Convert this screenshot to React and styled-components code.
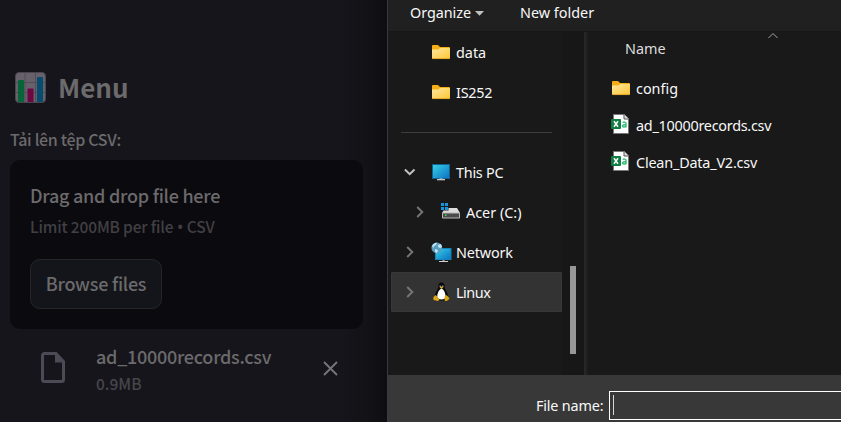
import React from "react";
import styled, { createGlobalStyle } from "styled-components";

const Global = createGlobalStyle`
  * { box-sizing: border-box; }
  body { margin: 0; background: #16151b; overflow: hidden; }
  svg { display: block; flex: none; }
`;

const Page = styled.div`
  display: flex;
  width: 841px;
  height: 422px;
  overflow: hidden;
`;

/* ---------- sidebar ---------- */

const Sidebar = styled.aside`
  width: 387px;
  height: 422px;
  padding: 67px 23px 0 10px;
  color: #6b6a6c;
  font-family: "Noto Sans CJK SC", sans-serif;
  font-weight: 500;
  background: linear-gradient(90deg, #16151b 0, #16151b 340px, #131217 366px, #0e0d12 387px);
`;

const Title = styled.h1`
  display: flex;
  align-items: center;
  gap: 12px;
  height: 40px;
  margin: 0;
  padding-left: 5px;
  font-size: 26px;
  font-weight: 700;
  line-height: 40px;
`;

const Line = styled.div`
  font-size: ${(p) => p.$size}px;
  line-height: ${(p) => p.$height}px;
  letter-spacing: ${(p) => p.$spacing || 0}px;
  color: ${(p) => (p.$dim ? p.$dim : "inherit")};
  white-space: nowrap;
`;

const Label = styled(Line)`
  margin-top: 20px;
`;

const Bullet = styled.span`
  margin: 0 0.5px;
  font-family: "Noto Sans", sans-serif;
`;

const DropZone = styled.section`
  width: 353px;
  height: 169px;
  margin-top: 9px;
  padding: 21px 20px 0;
  border-radius: 10px;
  background: #0b0a0f;
`;

const BrowseButton = styled.button`
  display: flex;
  align-items: center;
  justify-content: center;
  width: 132px;
  height: 50px;
  margin-top: 16px;
  padding: 0 0 2px;
  border: 1px solid #25252a;
  border-radius: 10px;
  background: #14151a;
  color: inherit;
  font: 500 18px "Noto Sans CJK SC", sans-serif;
  letter-spacing: -0.25px;
`;

const Upload = styled.div`
  display: flex;
  padding: 14px 0 0 31px;
`;

const UploadText = styled.div`
  width: 227px;
  margin-left: 30px;
`;

const UploadIcon = styled.div`
  padding-top: 9px;
`;

const CloseIcon = styled.div`
  padding-top: 18px;
`;

/* ---------- file dialog ---------- */

const Dialog = styled.main`
  display: flex;
  flex-direction: column;
  width: 454px;
  height: 422px;
  border-left: 1px solid #3a3a3d;
  background: #191919;
  color: #f8f8f8;
  font-family: "Noto Sans", sans-serif;
  font-size: 14.4px;
`;

const Toolbar = styled.header`
  display: flex;
  height: 32px;
  padding: 3px 0 0 22px;
  background: #202020;
  border-bottom: 1px solid #171717;
`;

const ToolItem = styled.div`
  display: flex;
  align-items: center;
  width: ${(p) => p.$width}px;
  height: 20px;
  gap: 4px;
`;

const Body = styled.div`
  display: flex;
  height: 343px;
`;

const Nav = styled.nav`
  width: 174px;
  padding-left: 3px;
`;

const NavRow = styled.div`
  display: flex;
  align-items: center;
  width: 171px;
  height: 40px;
  padding-left: ${(p) => 12 + (p.$indent || 0)}px;
  background: ${(p) => (p.$selected ? "#333333" : "transparent")};
  border: 1px solid ${(p) => (p.$selected ? "#383838" : "transparent")};
  border-radius: 1px;
`;

const Chevron = styled.div`
  width: 12px;
  margin-right: 15px;
`;

const NavIcon = styled.div`
  display: flex;
  justify-content: center;
  width: 20px;
  margin-right: 5px;
  padding-bottom: ${(p) => p.$lift || 0}px;
`;

const Text = styled.span`
  letter-spacing: ${(p) => p.$spacing || 0}px;
  line-height: 20px;
  white-space: nowrap;
`;

const NavText = styled(Text)`
  padding-top: 2px;
`;

const Separator = styled.hr`
  width: 151px;
  height: 1px;
  margin: 20px 0 19px 10px;
  border: 0;
  background: #3d3d3d;
`;

const ScrollTrack = styled.div`
  width: 22px;
  padding: 234px 0 0 8px;
  background: #171717;
`;

const ScrollThumb = styled.div`
  width: 6px;
  height: 88px;
  background: #979797;
`;

const Splitter = styled.div`
  width: 4px;
  border-left: 2px solid #272727;
  background: #1e1e1e;
`;

const Files = styled.section`
  flex: 1;
  padding-left: 23px;
`;

const FilesHeader = styled.div`
  display: flex;
  height: 38px;
  padding-left: 14px;
  color: #dedede;
`;

const HeaderName = styled.div`
  width: 142px;
  padding-top: 7px;
`;

const FileRow = styled.div`
  display: flex;
  align-items: center;
  gap: 5px;
  height: 37px;
`;

const FileIcon = styled.div`
  width: 20px;
  padding-bottom: ${(p) => p.$lift || 0}px;
`;

const Footer = styled.footer`
  display: flex;
  height: 47px;
  padding: 16px 0 0 148px;
  background: #383838;
`;

const FieldLabel = styled.label`
  width: 73px;
  padding-top: 5px;
  line-height: 20px;
  letter-spacing: -0.18px;
  white-space: nowrap;
`;

const Field = styled.div`
  flex: 1;
  height: 29px;
  padding: 3px 0 0 3px;
  border: 1px solid #ffffff;
  border-right: 0;
`;

const Caret = styled.div`
  width: 1px;
  height: 20px;
  background: #d6d6d6;
`;

/* ---------- drawings ---------- */

const ChartIcon = () => (
  <svg width="31" height="31" viewBox="0 0 31 31">
    <rect x="0.5" y="0.5" width="30" height="30" rx="3.5" fill="#66616b" stroke="#49464f" />
    <path d="M10 1v29M20.500 1v29M1 10.500h29M1 20.500h29" stroke="#514d57" />
    <path d="M3 30V9a1 1 0 0 1 1-1h4a1 1 0 0 1 1 1V30z" fill="#066536" />
    <path d="M12.500 30V17.500a1 1 0 0 1 1-1h4a1 1 0 0 1 1 1V30z" fill="#6d0743" />
    <path d="M22 30V6a1 1 0 0 1 1-1h4a1 1 0 0 1 1 1V30z" fill="#064b70" />
  </svg>
);

const DocIcon = () => (
  <svg width="25" height="31" viewBox="0 0 25 31">
    <path d="M3.500 1.500H15L22.500 9.500v18a2 2 0 0 1-2 2H3.500a2 2 0 0 1-2-2V3.500a2 2 0 0 1 2-2z" fill="none" stroke="#4c4b55" strokeWidth="3" />
    <path d="M14 1v9.500h10z" fill="#4c4b55" />
  </svg>
);

const CrossIcon = () => (
  <svg width="15" height="15" viewBox="0 0 15 15">
    <path d="M1 1l13 13M14 1L1 14" stroke="#77767a" strokeWidth="1.8" />
  </svg>
);

const Folder = () => (
  <svg width="20" height="16" viewBox="0 0 20 16">
    <defs>
      <linearGradient id="folder" x1="0" y1="0" x2="1" y2="1">
        <stop offset="0" stopColor="#ffe9a0" />
        <stop offset="1" stopColor="#fdc535" />
      </linearGradient>
    </defs>
    <path d="M1 2a1 1 0 0 1 1-1h5l2 2h9a1 1 0 0 1 1 1v3H1z" fill="#f4ae14" />
    <path d="M1 5.500h6.500L9 4h10v10a1 1 0 0 1-1 1H2a1 1 0 0 1-1-1z" fill="url(#folder)" />
    <path d="M1.500 14.600h17" stroke="#d99a1c" strokeWidth=".8" />
  </svg>
);

const Down = () => (
  <svg width="12" height="12" viewBox="0 0 12 12">
    <path d="M0.900 3.500L5.700 8.200l4.800-4.700" fill="none" stroke="#c4c4c4" strokeWidth="2" />
  </svg>
);

const Right = () => (
  <svg width="12" height="12" viewBox="0 0 12 12">
    <path d="M3.200 1L8.300 6l-5.100 5" fill="none" stroke="#777777" strokeWidth="1.900" />
  </svg>
);

const Monitor = () => (
  <svg width="20" height="18" viewBox="0 0 20 18">
    <defs>
      <linearGradient id="screen" x1="0" y1="0" x2="1" y2="1">
        <stop offset="0" stopColor="#35d3e6" />
        <stop offset="1" stopColor="#0b6fc4" />
      </linearGradient>
    </defs>
    <rect x="1.500" y="1.500" width="17" height="14" fill="url(#screen)" stroke="#12618f" />
    <path d="M8.500 15h3v1h-3z" fill="#8a9299" />
    <path d="M6 16h8v1.300H6z" fill="#c5cbd0" />
  </svg>
);

const Drive = () => (
  <svg width="20" height="16" viewBox="0 0 20 16">
    <path d="M4.500 5H16l3 5H1l1.500-2.500H7.500V5z" fill="#dcdcdc" />
    <path d="M0 0h3v3H0zM4 0h3v3H4zM0 4h3v3H0zM4 4h3v3H4z" fill="#1594df" />
    <rect x="1" y="9.500" width="18" height="6" rx=".8" fill="#b8b8b8" />
    <rect x="2" y="10.500" width="16" height="4" fill="#4a4b4d" />
    <path d="M4 11.500h1.500v1.500H4z" fill="#43dc52" />
  </svg>
);

const NetworkIcon = () => (
  <svg width="21" height="21" viewBox="0 0 21 21">
    <rect x="4.500" y="6.500" width="15.500" height="11" fill="url(#screen)" stroke="#1583ba" />
    <path d="M11.500 18h2v1.500h-2z" fill="#9ba2a8" />
    <path d="M8 19h9v1H8z" fill="#ccd1d5" />
    <circle cx="5.800" cy="5.800" r="5.400" fill="#5a9ec0" />
    <path d="M1 4c1-2 3-3.500 5-3.300L5 3 3 4 2.500 6zM7 3l3-1 1 3-2 1-2-1zM4 7l3 1-1 3-2-1z" fill="#c3e4f0" />
  </svg>
);

const Penguin = () => (
  <svg width="17" height="20" viewBox="0 0 18 20">
    <path d="M9 0c-2.500 0-3.500 2-3.300 4.500C5.800 7 2 10 2 14.500c0 3 3 4.500 7 4.500s7.200-1.500 7-4.500C15.800 10.500 12.200 7 12.300 4.500 12.400 2 11.500 0 9 0z" fill="#090909" />
    <path d="M9 6.500c-2 0-4.500 4.500-4.500 8 0 2.500 2 3.500 4.500 3.500s4.300-1 4.300-3.500c0-3.500-2.300-8-4.300-8z" fill="#ffffff" />
    <circle cx="7.600" cy="3.800" r=".8" fill="#bdbdbd" />
    <circle cx="10.300" cy="3.800" r=".8" fill="#bdbdbd" />
    <path d="M7 5.200L9 4.300l2 .9-2 1.600z" fill="#e3a812" />
    <path d="M3 13.300l3.800 4.700c-.5 2-2.800 1.800-6.300.2-.5-1 0-3 .5-3.500zM14.800 13.500L17.500 17c-1 1.300-2.500 3-4.500 2.600-1.300-.8-.7-4.500-.2-5.500z" fill="#dba514" />
  </svg>
);

const CsvIcon = () => (
  <svg width="20" height="20" viewBox="0 0 20 20">
    <path d="M2.500.5H13.500L17.500 4.500v15h-15z" fill="#fff" stroke="#777" />
    <path d="M13 .5V5h4.500" fill="#ddd" stroke="#555" />
    <rect x="0" y="5" width="10" height="10" rx="1" fill="#127d43" />
    <path d="M3 7.300l4 5.400M7 7.300l-4 5.400" stroke="#fff" strokeWidth="1.500" />
    <path d="M11.700 8.500c1.300-.8 3.300-.6 3.300.8v4.200M15 10.500c-4-.2-4.300 2.500-2.300 2.500 1 0 2.300-.6 2.300-2" fill="none" stroke="#35bd78" strokeWidth="1.400" />
  </svg>
);

const navItems = [
  { label: "data", icon: Folder, spacing: 0 },
  { label: "IS252", icon: Folder, spacing: -0.25 },
  { separator: true, label: "separator" },
  { label: "This PC", icon: Monitor, chevron: Down, spacing: -0.25 },
  { label: "Acer (C:)", icon: Drive, chevron: Right, indent: 10, spacing: 0, lift: 3 },
  { label: "Network", icon: NetworkIcon, chevron: Right, spacing: -0.15 },
  { label: "Linux", icon: Penguin, chevron: Right, selected: true, spacing: -0.45 },
];

const files = [
  { label: "config", icon: Folder, lift: 2 },
  { label: "ad_10000records.csv", icon: CsvIcon, spacing: -0.26, lift: 4 },
  { label: "Clean_Data_V2.csv", icon: CsvIcon, spacing: -0.19, lift: 4 },
];

export default function App() {
  return (
    <Page>
      <Global />
      <Sidebar>
        <Title><ChartIcon />Menu</Title>
        <Label $size={16} $height={24} $spacing={-0.32}>Tải lên tệp CSV:</Label>
        <DropZone>
          <Line $size={18} $height={29} $spacing={-0.25}>Drag and drop file here</Line>
          <Line $size={15.5} $height={32} $spacing={-0.16} $dim="#414044">
            Limit 200MB per file <Bullet>•</Bullet> CSV
          </Line>
          <BrowseButton>Browse files</BrowseButton>
        </DropZone>
        <Upload>
          <UploadIcon><DocIcon /></UploadIcon>
          <UploadText>
            <Line $size={18} $height={26} $spacing={-0.27}>ad_10000records.csv</Line>
            <Line $size={15.5} $height={29} $dim="#464549">0.9MB</Line>
          </UploadText>
          <CloseIcon><CrossIcon /></CloseIcon>
        </Upload>
      </Sidebar>
      <Dialog>
        <Toolbar>
          <ToolItem $width={110}>
            <Text $spacing={-0.05}>Organize</Text>
            <svg width="9" height="5" viewBox="0 0 9 5"><path d="M0 0h9L4.500 4.700z" fill="#c1c1c1" /></svg>
          </ToolItem>
          <ToolItem $width={90}><Text>New folder</Text></ToolItem>
        </Toolbar>
        <Body>
          <Nav>
            {navItems.map(({ label, icon: Icon, chevron: Arrow, ...item }) =>
              item.separator ? <Separator key={label} /> : (
                <NavRow key={label} $indent={item.indent} $selected={item.selected}>
                  <Chevron>{Arrow && <Arrow />}</Chevron>
                  <NavIcon $lift={item.lift}><Icon /></NavIcon>
                  <NavText $spacing={item.spacing}>{label}</NavText>
                </NavRow>
              )
            )}
          </Nav>
          <ScrollTrack><ScrollThumb /></ScrollTrack>
          <Splitter />
          <Files>
            <FilesHeader>
              <HeaderName><Text>Name</Text></HeaderName>
              <svg width="12" height="8" viewBox="0 0 12 8"><path d="M1.500 6L6 1.500 10.500 6" fill="none" stroke="#a5a5a5" /></svg>
            </FilesHeader>
            {files.map(({ label, icon: Icon, spacing, lift }) => (
              <FileRow key={label}>
                <FileIcon $lift={lift}><Icon /></FileIcon>
                <Text $spacing={spacing}>{label}</Text>
              </FileRow>
            ))}
          </Files>
        </Body>
        <Footer>
          <FieldLabel>File name:</FieldLabel>
          <Field><Caret /></Field>
        </Footer>
      </Dialog>
    </Page>
  );
}
